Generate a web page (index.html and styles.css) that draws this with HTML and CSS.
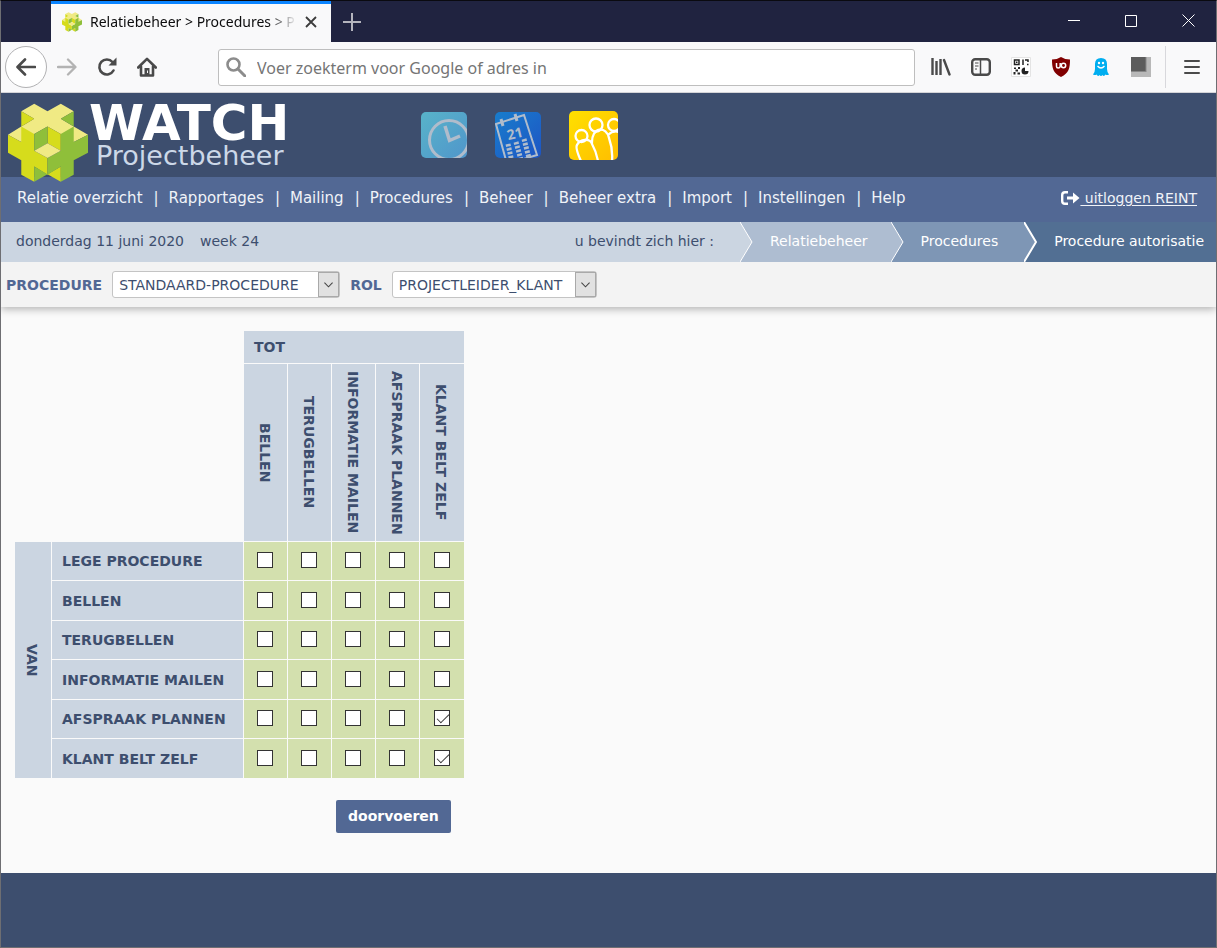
FILE: index.html
```html
<!DOCTYPE html>
<html lang="nl">
<head>
<meta charset="utf-8">
<title>Relatiebeheer &gt; Procedures &gt; Procedure autorisatie</title>
<link rel="stylesheet" href="styles.css">
</head>
<body>
<svg class="defs" aria-hidden="true">
  <symbol id="cube" viewBox="24 33 241 236">
    <path fill="#f0ea84" d="M103 33 143 55 183 33 222 55 183 78 222 101 265 126 222 148 183 124 143 101 103 124 64 148 24 126 64 101 103 78 64 55Z"/>
    <path fill="#d6dc1c" d="M64 55 103 78 64 101ZM64 101 103 124V174L143 196V247L103 222V268L64 247V203L24 180V126L64 148ZM143 101 183 124V174L143 152ZM183 222 143 245 183 268Z"/>
    <path fill="#8fbf3a" d="M222 55 183 78 222 101ZM222 101 183 124V174L143 196V247L183 222V268L222 247V203L265 180V126L222 148ZM143 101 103 124V174L143 152ZM103 222 143 245 103 268Z"/>
    <path fill="#f0ea84" d="M103 174 143 152 183 174 143 196Z"/>
  </symbol>
</svg>

<header class="browser">
  <div class="tabs">
    <div class="tab">
      <svg class="favicon" aria-hidden="true"><use href="#cube"/></svg>
      <span class="tab-title">Relatiebeheer &gt; Procedures &gt; P</span>
      <button class="plain" aria-label="Tabblad sluiten"><svg width="12" height="12" viewBox="0 0 12 12"><path d="M1 1 11 11M11 1 1 11" fill="none" stroke="#3c3c3c" stroke-width="1.8"/></svg></button>
    </div>
    <button class="plain new-tab" aria-label="Nieuw tabblad"><svg width="18" height="18" viewBox="0 0 18 18"><path d="M9 0V18M0 9H18" fill="none" stroke="#b4b4bd" stroke-width="2"/></svg></button>
    <div class="window-buttons">
      <button class="plain" aria-label="Minimaliseren"><svg width="12" height="12" viewBox="0 0 12 12"><path d="M0 5.5H12" stroke="#fff"/></svg></button>
      <button class="plain" aria-label="Maximaliseren"><svg width="12" height="12" viewBox="0 0 12 12"><path d="M.5 .5H11.5V11.5H.5Z" fill="none" stroke="#fff"/></svg></button>
      <button class="plain" aria-label="Sluiten"><svg width="13" height="13" viewBox="0 0 13 13"><path d="M.5 .5 12.5 12.5M12.5 .5 .5 12.5" stroke="#fff"/></svg></button>
    </div>
  </div>
  <div class="toolbar">
    <button class="plain back" aria-label="Terug"><svg width="20" height="18" viewBox="0 0 20 18"><path d="M19 9H2M9 1.5 1.500 9 9 16.500" fill="none" stroke="#4a4a4a" stroke-width="2.600" stroke-linecap="round" stroke-linejoin="round"/></svg></button>
    <button class="plain" aria-label="Vooruit"><svg width="20" height="18" viewBox="0 0 20 18"><path d="M1 9H18M11 1.500 18.500 9 11 16.500" fill="none" stroke="#b3b3b3" stroke-width="2.300" stroke-linecap="round" stroke-linejoin="round"/></svg></button>
    <button class="plain" aria-label="Vernieuwen"><svg width="20" height="20" viewBox="0 0 20 20"><path d="M15.500 5A7.500 7.500 0 1 0 16.500 13.500" fill="none" stroke="#4a4a4a" stroke-width="2.600" stroke-linecap="round"/><path d="M19.500 .5V8.500H11.500Z" fill="#4a4a4a"/></svg></button>
    <button class="plain" aria-label="Startpagina"><svg width="20" height="20" viewBox="0 0 20 20"><path d="M1.200 10.500 10 1.800 18.800 10.500M4 9.500V18.500H16V9.500" fill="none" stroke="#4a4a4a" stroke-width="2.600" stroke-linecap="round" stroke-linejoin="round"/><path d="M7.500 11H12.500V19H7.500Z" fill="#4a4a4a"/><path d="M10.500 13.500V16" stroke="#f9f9fa"/></svg></button>
    <label class="address">
      <svg width="20" height="20" viewBox="0 0 20 20" aria-hidden="true"><circle cx="7.500" cy="7.500" r="6" fill="none" stroke="#8c8c8c" stroke-width="2.600"/><path d="M12 12 19 19" stroke="#8c8c8c" stroke-width="3" stroke-linecap="round"/></svg>
      <input type="text" aria-label="Adres" placeholder="Voer zoekterm voor Google of adres in">
    </label>
    <div class="extensions">
      <button class="plain" aria-label="Bibliotheek"><svg width="20" height="20" viewBox="0 0 20 20"><path d="M1.500 1V18M5.500 4V18M9.500 2V18" fill="none" stroke="#4a4a4a" stroke-width="2.400"/><path d="M13 3 18.500 17.500" stroke="#4a4a4a" stroke-width="2.400" stroke-linecap="round"/></svg></button>
      <button class="plain" aria-label="Zijbalk"><svg width="20" height="20" viewBox="0 0 20 20"><rect x="1.200" y="2.200" width="17.600" height="15.600" rx="3" fill="none" stroke="#4a4a4a" stroke-width="2.400"/><path d="M9.500 2V18" stroke="#4a4a4a" stroke-width="1.500"/><path d="M4 6H7.500M4 9H7.500M4 12H6" stroke="#4a4a4a"/></svg></button>
      <button class="plain" aria-label="QR-code"><svg width="20" height="20" viewBox="0 0 20 20"><path fill="#fff" stroke="#e4e4e4" d="M.5 .5H19.500V19.500H.5Z"/><path fill="none" stroke="#222" stroke-width="1.500" d="M3.500 3H8V7.500H3.500ZM12 2.500V8M14 3H17V5M16 7.500H17.500"/><path fill="#222" d="M5 4.500H6.500V6H5ZM3 10.500H5V12H3ZM7 10H9V12H7ZM4.500 12.500H7V14.500H4.500ZM2.500 15H4.500V17.500H2.500ZM6.500 15.500H9V17.500H6.500ZM14 10.500A3.500 3.500 0 1 0 17.500 14H14Z"/></svg></button>
      <button class="plain" aria-label="uBlock"><svg width="20" height="20" viewBox="0 0 20 20"><path fill="#800000" d="M10 0Q14 2.500 19 2.500C19 11 18 16 10 20C2 16 1 11 1 2.500Q6 2.500 10 0Z"/><path fill="none" stroke="#fff" stroke-width="1.500" d="M5.500 6V9.500Q5.500 11 7.200 11T9.200 9.500V6"/><circle cx="12.500" cy="8.500" r="2.200" fill="none" stroke="#fff" stroke-width="1.500"/></svg></button>
      <button class="plain" aria-label="Ghostery"><svg width="20" height="20" viewBox="0 0 20 20"><path fill="#00aef0" d="M4 7Q4 1 10 1T16 7V12Q16 15 18 17.500 16 18.500 14.500 17.500 13 20 11.500 18 10 20 8.500 18 7 20 5.500 17.500 4 18.500 2 17.500 4 15 4 12Z"/><circle cx="8" cy="6" r="1.200" fill="#fff"/><circle cx="12" cy="6" r="1.200" fill="#fff"/><path d="M6.500 9Q10 13 13.500 9" fill="none" stroke="#fff" stroke-width="1.300"/></svg></button>
      <button class="plain" aria-label="Extensie"><svg width="20" height="20" viewBox="0 0 20 20"><path fill="#b8b8b8" d="M0 0H20V20H0Z"/><path fill="#888" d="M0 0H15.500V15H0Z"/><path fill="#5c5c5c" d="M0 0H14.500V14H0Z"/></svg></button>
    </div>
    <button class="plain menu" aria-label="Menu"><svg width="16" height="16" viewBox="0 0 16 16"><path d="M1 2H15M1 8H15M1 14H15" stroke="#4a4a4a" stroke-width="2" stroke-linecap="round"/></svg></button>
  </div>
</header>

<header class="masthead">
  <a class="brand" href="#">
    <svg class="logo" aria-hidden="true"><use href="#cube"/></svg>
    <span class="brand-text"><strong>WATCH</strong><span>Projectbeheer</span></span>
  </a>
  <div class="modules">
    <a href="#" aria-label="Uren"><svg width="46" height="46" viewBox="0 0 46 46"><defs><linearGradient id="g1" x2="1" y2="1"><stop stop-color="#58b3c9"/><stop offset="1" stop-color="#5096cb"/></linearGradient><clipPath id="r1"><rect width="46" height="46" rx="5"/></clipPath></defs><g clip-path="url(#r1)"><path fill="url(#g1)" d="M0 0H46V46H0Z"/><g fill="none" stroke="#b0bccb"><circle cx="28" cy="28" r="19.500" stroke-width="3"/><path d="M24 14 28.500 28.500 39 24" stroke-width="3.500"/></g></g></svg></a>
    <a href="#" aria-label="Agenda"><svg width="46" height="46" viewBox="0 0 46 46"><defs><linearGradient id="g2" x2="1" y2="1"><stop stop-color="#187dcc"/><stop offset="1" stop-color="#1e55c4"/></linearGradient><clipPath id="r2"><rect width="46" height="46" rx="5"/></clipPath></defs><g clip-path="url(#r2)"><path fill="url(#g2)" d="M0 0H46V46H0Z"/><g fill="none" stroke="#b0bccb"><path d="M1 12 29 3 42 43 12 52Z" stroke-width="2"/><path d="M6 7 8 14M20 2 22 9" stroke-width="3"/><path d="M13 32 17 50M21 30 26 48M29 27 34 46" stroke-width="5" stroke-dasharray="2.500 1.500"/></g><text x="12" y="27" transform="rotate(-14 18 23)" class="day">21</text></g></svg></a>
    <a href="#" aria-label="Relaties"><svg width="49" height="49" viewBox="0 0 49 49"><defs><linearGradient id="g3" x2="1" y2="1"><stop stop-color="#ffe000"/><stop offset="1" stop-color="#ffbe00"/></linearGradient><clipPath id="r3"><rect width="49" height="49" rx="5"/></clipPath></defs><g clip-path="url(#r3)"><path fill="url(#g3)" d="M0 0H49V49H0Z"/><g fill="none" stroke="#fff" stroke-width="2.300"><circle cx="12.500" cy="25" r="6"/><circle cx="27" cy="14" r="6.500"/><circle cx="45" cy="14" r="6"/><path d="M12 50Q6 37 8 34C11 28 21 27 23 33Q27 40 29 50M23 33C22 15 38 15 40 27Q44 38 43 50M39 24Q44 19 50 21"/></g></g></svg></a>
  </div>
</header>

<nav class="mainnav">
  <ul>
    <li><a href="#">Relatie overzicht</a></li>
    <li><a href="#">Rapportages</a></li>
    <li><a href="#">Mailing</a></li>
    <li><a href="#">Procedures</a></li>
    <li><a href="#">Beheer</a></li>
    <li><a href="#">Beheer extra</a></li>
    <li><a href="#">Import</a></li>
    <li><a href="#">Instellingen</a></li>
    <li><a href="#">Help</a></li>
  </ul>
  <a class="logout" href="#"><svg width="19" height="14" viewBox="0 0 19 14" aria-hidden="true"><path d="M7 1.200H4Q1.200 1.200 1.200 4V10Q1.200 12.800 4 12.800H7" fill="none" stroke="#fff" stroke-width="2.400"/><path fill="#fff" d="M6 5.500H12V1.500L18.500 7 12 12.500V8.500H6Z"/></svg><span>&nbsp;uitloggen REINT</span></a>
</nav>

<div class="crumbs">
  <span class="date">donderdag 11 juni 2020</span>
  <span>week 24</span>
  <span class="here">u bevindt zich hier :</span>
  <svg class="chev chev-1" viewBox="0 0 13 40" aria-hidden="true"><path d="M0 0 12 20 0 40"/></svg>
  <a class="crumb crumb-1" href="#">Relatiebeheer</a>
  <svg class="chev chev-2" viewBox="0 0 13 40" aria-hidden="true"><path d="M0 0 12 20 0 40"/></svg>
  <a class="crumb crumb-2" href="#">Procedures</a>
  <svg class="chev chev-3" viewBox="0 0 13 40" aria-hidden="true"><path d="M0 0 12 20 0 40"/></svg>
  <a class="crumb crumb-3" href="#">Procedure autorisatie</a>
</div>

<form class="filter">
  <label for="procedure">PROCEDURE</label>
  <span class="select"><select id="procedure"><option>STANDAARD-PROCEDURE</option></select><svg viewBox="0 0 21 25" aria-hidden="true"><path d="M6 10.500 10.500 15 15 10.500"/></svg></span>
  <label for="rol">ROL</label>
  <span class="select"><select id="rol"><option>PROJECTLEIDER_KLANT</option></select><svg viewBox="0 0 21 25" aria-hidden="true"><path d="M6 10.500 10.500 15 15 10.500"/></svg></span>
</form>

<main>
  <form class="matrix-form">
    <table class="matrix">
      <thead>
        <tr><td colspan="2" rowspan="2"></td><th class="to" colspan="5">TOT</th></tr>
        <tr class="columns"><th><span>BELLEN</span></th><th><span>TERUGBELLEN</span></th><th><span>INFORMATIE MAILEN</span></th><th><span>AFSPRAAK PLANNEN</span></th><th><span>KLANT BELT ZELF</span></th></tr>
      </thead>
      <tbody>
        <tr><th class="from" rowspan="6"><span>VAN</span></th><th class="row">LEGE PROCEDURE</th><td><input type="checkbox" aria-label="Lege procedure, bellen"></td><td><input type="checkbox" aria-label="Lege procedure, terugbellen"></td><td><input type="checkbox" aria-label="Lege procedure, informatie mailen"></td><td><input type="checkbox" aria-label="Lege procedure, afspraak plannen"></td><td><input type="checkbox" aria-label="Lege procedure, klant belt zelf"></td></tr>
        <tr><th class="row">BELLEN</th><td><input type="checkbox" aria-label="Bellen, bellen"></td><td><input type="checkbox" aria-label="Bellen, terugbellen"></td><td><input type="checkbox" aria-label="Bellen, informatie mailen"></td><td><input type="checkbox" aria-label="Bellen, afspraak plannen"></td><td><input type="checkbox" aria-label="Bellen, klant belt zelf"></td></tr>
        <tr><th class="row">TERUGBELLEN</th><td><input type="checkbox" aria-label="Terugbellen, bellen"></td><td><input type="checkbox" aria-label="Terugbellen, terugbellen"></td><td><input type="checkbox" aria-label="Terugbellen, informatie mailen"></td><td><input type="checkbox" aria-label="Terugbellen, afspraak plannen"></td><td><input type="checkbox" aria-label="Terugbellen, klant belt zelf"></td></tr>
        <tr><th class="row">INFORMATIE MAILEN</th><td><input type="checkbox" aria-label="Informatie mailen, bellen"></td><td><input type="checkbox" aria-label="Informatie mailen, terugbellen"></td><td><input type="checkbox" aria-label="Informatie mailen, informatie mailen"></td><td><input type="checkbox" aria-label="Informatie mailen, afspraak plannen"></td><td><input type="checkbox" aria-label="Informatie mailen, klant belt zelf"></td></tr>
        <tr><th class="row">AFSPRAAK PLANNEN</th><td><input type="checkbox" aria-label="Afspraak plannen, bellen"></td><td><input type="checkbox" aria-label="Afspraak plannen, terugbellen"></td><td><input type="checkbox" aria-label="Afspraak plannen, informatie mailen"></td><td><input type="checkbox" aria-label="Afspraak plannen, afspraak plannen"></td><td><input type="checkbox" aria-label="Afspraak plannen, klant belt zelf" checked></td></tr>
        <tr><th class="row">KLANT BELT ZELF</th><td><input type="checkbox" aria-label="Klant belt zelf, bellen"></td><td><input type="checkbox" aria-label="Klant belt zelf, terugbellen"></td><td><input type="checkbox" aria-label="Klant belt zelf, informatie mailen"></td><td><input type="checkbox" aria-label="Klant belt zelf, afspraak plannen"></td><td><input type="checkbox" aria-label="Klant belt zelf, klant belt zelf" checked></td></tr>
      </tbody>
    </table>
    <button class="submit" type="button">doorvoeren</button>
  </form>
</main>
<footer></footer>
</body>
</html>
```
FILE: styles.css
```css
* { box-sizing: border-box; }

body {
  margin: 0;
  min-height: 100vh;
  display: flex;
  flex-direction: column;
  border: 1px solid #6e6e72;
  border-top-color: #0a0a10;
  background: #fafafa;
  color: #3d4e6e;
  font: 14px/20px "DejaVu Sans", Verdana, sans-serif;
}

a { color: inherit; text-decoration: none; }
svg { display: block; flex: none; }
.defs { position: absolute; width: 0; height: 0; }

.plain {
  display: flex;
  align-items: center;
  justify-content: center;
  padding: 0;
  border: 0;
  background: none;
}

/* Browser chrome */
.browser { font-family: "Noto Sans", "Open Sans", sans-serif; }

.tabs {
  display: flex;
  height: 41px;
  padding-left: 50px;
  background: #202340;
}

.tab {
  display: flex;
  align-items: center;
  width: 280px;
  padding: 0 14px 2px 11px;
  border-top: 3px solid #0a84ff;
  background: #f9f9fa;
  color: #0c0c0d;
}

.favicon { width: 20px; height: 20px; margin-right: 8px; }

.tab-title {
  flex: 1;
  white-space: nowrap;
  font-size: 14px;
  -webkit-mask-image: linear-gradient(to right, #000 86%, transparent);
  mask-image: linear-gradient(to right, #000 86%, transparent);
}

.tab .plain { margin-left: 8px; }
.new-tab { width: 42px; }

.window-buttons {
  display: flex;
  gap: 45px;
  margin-left: auto;
  padding: 0 21px 2px 0;
}

.toolbar {
  display: flex;
  align-items: center;
  height: 51px;
  padding: 0 7px 0 4px;
  gap: 20px;
  background: #f9f9fa;
  border-bottom: 1px solid #d4d4d8;
}

.back {
  width: 42px;
  height: 42px;
  margin-right: -10px;
  border: 1px solid #b1b1b3;
  border-radius: 50%;
  background: #fff;
}

.address {
  flex: 1;
  display: flex;
  align-items: center;
  height: 37px;
  margin: 0 -4px 0 41px;
  padding: 0 7px;
  gap: 11px;
  border: 1px solid #bebebe;
  border-radius: 3px;
  background: #fff;
}

.address input {
  flex: 1;
  min-width: 0;
  padding: 2px 0 0;
  border: 0;
  outline: 0;
  background: none;
  font: 16px/24px "Noto Sans", "Open Sans", sans-serif;
}

.address input::placeholder { color: #757575; opacity: 1; }
.extensions { display: flex; gap: 20px; }

.menu {
  height: 42px;
  width: 44px;
  margin-left: -6px;
  padding-left: 9px;
  border-left: 1px solid #d8d8dc;
}

/* Site header */
.masthead {
  display: flex;
  height: 84px;
  padding-left: 7px;
  background: #3d4e6e;
}

.brand {
  display: flex;
  gap: 1px;
  width: 413px;
  padding-top: 10px;
  color: #fff;
}

.logo { position: relative; width: 80px; height: 80px; }
.brand-text { display: flex; flex-direction: column; }
.brand-text strong { font-size: 50px; line-height: 40px; }
.brand-text span { padding-left: 7px; color: #ccd8e8; font-size: 27px; line-height: 26px; }
.modules { display: flex; align-items: center; gap: 28px; }
.day { fill: #b0bccb; font: bold 14px "Open Sans", sans-serif; }

.mainnav {
  display: flex;
  justify-content: space-between;
  height: 45px;
  padding: 11px 19px 0 16px;
  background: #526894;
  color: #f0f3f8;
}

.mainnav ul {
  display: flex;
  margin: 0;
  padding: 0;
  list-style: none;
  font-size: 15px;
  white-space: nowrap;
}

.mainnav li + li::before { content: "|"; padding: 0 10px 0 11px; }
.logout { display: flex; height: 20px; }
.logout svg { margin-top: 3px; }
.logout span { text-decoration: underline; text-underline-offset: 2px; }

.crumbs {
  display: flex;
  height: 40px;
  padding-left: 15px;
  background: #cbd5e1;
  line-height: 38px;
  white-space: nowrap;
}

.date { margin-right: 16px; }
.here { margin-left: auto; margin-right: 26px; }
.chev { width: 13px; height: 40px; stroke: #fff; stroke-width: 1; }
.chev-1 { background: #aebdd1; fill: #cbd5e1; }
.chev-2 { background: #7e96b5; fill: #aebdd1; }
.chev-3 { background: #526f93; fill: #7e96b5; stroke-width: 2; }
.crumb { color: #fff; padding: 0 26px 0 17px; }
.crumb-1 { background: #aebdd1; padding-right: 23px; }
.crumb-2 { background: #7e96b5; }
.crumb-3 { background: #526f93; padding-right: 12px; }

.filter {
  display: flex;
  align-items: center;
  gap: 10px;
  height: 45px;
  padding-left: 5px;
  background: #f3f3f3;
  box-shadow: 0 2px 8px rgba(0, 0, 0, 0.3);
  clip-path: inset(0 0 -16px 0);
}

.filter label { color: #526894; font-weight: bold; }
.select { position: relative; display: flex; }

.select select {
  height: 27px;
  padding: 0 40px 0 6px;
  border: 1px solid #c4c4c4;
  border-radius: 3px;
  background: #fff;
  color: #3d4e6e;
  font: inherit;
  appearance: none;
}

#rol { padding-right: 33px; }

.select svg {
  position: absolute;
  top: 1px;
  right: 1px;
  width: 21px;
  height: 25px;
  border: 1px solid #a9a9a9;
  background: #e1e1e1;
  fill: none;
  stroke: #444;
  stroke-width: 1.2px;
  pointer-events: none;
}

/* Authorisation matrix */
main { flex: 1; padding: 23px 13px 40px; }
.matrix-form { display: flex; flex-direction: column; align-items: flex-start; }
.matrix { border-collapse: separate; border-spacing: 1px; white-space: nowrap; }
.matrix td, .matrix th { padding: 0; }
.matrix th { background: #cbd5e1; text-align: left; }
.matrix .to { height: 32px; padding-left: 10px; }
.matrix .columns th { width: 43px; height: 177px; padding-right: 2px; }
.matrix .columns th:last-child { width: 44px; }

.columns span, .from span {
  display: block;
  width: 20px;
  margin: 0 auto;
  writing-mode: vertical-rl;
  text-align: center;
}

.matrix .from { width: 36px; padding-right: 2px; }
.matrix .row { width: 191px; padding: 0 10px; }
.matrix tbody tr { height: 38px; }
.matrix tbody tr:nth-child(even) { height: 39px; }
.matrix tbody td { padding: 0 1px 2px 0; background: #d3e0ae; }

.matrix input {
  display: block;
  width: 16px;
  height: 16px;
  margin: 0 auto;
  border: 1px solid #333;
  background: #fff;
  appearance: none;
}

.matrix input:checked::before {
  content: "";
  display: block;
  width: 11px;
  height: 5px;
  margin: 3px 2px;
  border: solid #333;
  border-width: 0 0 1px 1px;
  transform: rotate(-45deg);
}

.submit {
  margin: 21px 0 0 322px;
  height: 33px;
  padding: 0 12px 2px;
  border: 0;
  border-radius: 2px;
  background: #526894;
  color: #fff;
  font: bold 14px/20px "DejaVu Sans", Verdana, sans-serif;
}

footer { height: 74px; background: #3d4e6e; }
```
